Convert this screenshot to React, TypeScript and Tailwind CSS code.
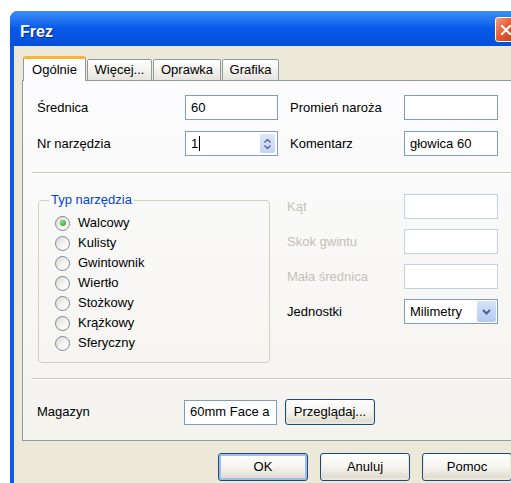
import React from 'react';

type BoxProps = { value?: string; disabled?: boolean; w?: string };

// plain edit field in the XP style
function TextBox({ value = '', disabled = false, w = 'w-[93px]' }: BoxProps) {
  return (
    <div
      className={`${w} h-[25px] flex items-center px-[5px] bg-white border ${
        disabled ? 'border-[#c4d0e2]' : 'border-[#7f9db9]'
      } text-black whitespace-nowrap overflow-hidden`}
    >
      {value}
    </div>
  );
}

function SpinBox({ value }: { value: string }) {
  return (
    <div className="w-[93px] h-[25px] flex items-center justify-between pl-[5px] pr-[2px] bg-white border border-[#7f9db9]">
      <span className="flex items-center">
        {value}
        <span className="ml-[1px] w-[1px] h-[15px] bg-black" />
      </span>
      <span className="w-[15px] h-[19px] rounded-[2px] bg-gradient-to-b from-[#dde7fc] to-[#c3d2f5] flex flex-col items-center justify-center gap-[2px]">
        <svg width="7" height="4" viewBox="0 0 7 4">
          <path d="M0.5 3.5 L3.5 0.5 L6.5 3.5" fill="none" stroke="#4d6185" strokeWidth="1.3" />
        </svg>
        <svg width="7" height="4" viewBox="0 0 7 4">
          <path d="M0.5 0.5 L3.5 3.5 L6.5 0.5" fill="none" stroke="#4d6185" strokeWidth="1.3" />
        </svg>
      </span>
    </div>
  );
}

function Select({ value }: { value: string }) {
  return (
    <div className="w-[94px] h-[25px] flex items-center justify-between pl-[5px] pr-[1px] bg-white border border-[#7f9db9]">
      <span>{value}</span>
      <span className="w-[19px] h-[21px] rounded-[2px] bg-gradient-to-b from-[#d6e2fc] to-[#b5c9f5] flex items-center justify-center">
        <svg width="9" height="6" viewBox="0 0 9 6">
          <path d="M1 1 L4.5 4.5 L8 1" fill="none" stroke="#4d6185" strokeWidth="2" />
        </svg>
      </span>
    </div>
  );
}

function Radio({ label, checked = false }: { label: string; checked?: boolean }) {
  return (
    <div className="h-[20px] flex items-center">
      <span className="w-[15px] h-[15px] rounded-full border border-[#7c8796] bg-gradient-to-br from-[#d8d8d2] via-[#f2f2ee] to-white flex items-center justify-center">
        {checked && (
          <span className="w-[6px] h-[6px] rounded-full bg-[radial-gradient(circle_at_35%_35%,#7ee07e,#21a121)]" />
        )}
      </span>
      <span className="ml-[8px]">{label}</span>
    </div>
  );
}

function Button({ children, w = 'w-[90px]', h = 'h-[28px]', primary = false }: {
  children: React.ReactNode; w?: string; h?: string; primary?: boolean;
}) {
  return (
    <div
      className={`${w} ${h} shrink-0 rounded-[3px] border border-[#1c4a7e] bg-gradient-to-b from-white via-[#f5f4ef] to-[#dcd7cb] flex items-center justify-center ${
        primary ? 'shadow-[inset_0_0_0_2px_#9dbdf0]' : 'shadow-[inset_0_-1px_0_1px_#ece9d8]'
      }`}
    >
      {children}
    </div>
  );
}

function Etched() {
  return <div className="h-[2px] border-t border-[#cbc8b8] border-b border-b-white" />;
}

const tools = ['Walcowy', 'Kulisty', 'Gwintownik', 'Wiertło', 'Stożkowy', 'Krążkowy', 'Sferyczny'];

export default function App() {
  return (
    <div className="w-[511px] h-[483px] overflow-hidden bg-white pt-[11px] pl-[10px] font-['Liberation_Sans',Arial,sans-serif] text-[13px] text-black">
      <div className="w-[520px] h-[472px] rounded-t-[8px] bg-[#1458e8] flex flex-col overflow-hidden">
        {/* title bar */}
        <div className="h-[35px] shrink-0 flex items-start justify-between pl-[10px] pr-[13px] bg-gradient-to-b from-[#3d8ef9] via-[#0759e8] to-[#0550dc]">
          <span className="mt-[9px] text-[16px] font-bold text-white [text-shadow:1px_1px_0_#0a2a8a]">Frez</span>
          <span className="mt-[6px] w-[22px] h-[25px] rounded-[3px] border border-white bg-gradient-to-br from-[#f39a7a] via-[#e2582e] to-[#c63c14] flex items-center justify-center">
            <svg width="12" height="12" viewBox="0 0 12 12">
              <path d="M2 2 L10 10 M10 2 L2 10" stroke="white" strokeWidth="2.2" strokeLinecap="round" />
            </svg>
          </span>
        </div>

        {/* client area */}
        <div className="flex-1 mx-[4px] bg-[#ece9d8] pt-[10px] pl-[8px] pr-[8px]">
          {/* tabs */}
          <div className="relative z-10 h-[25px] -mb-[1px] flex items-end pl-[1px]">
            <div className="w-[63px] h-[25px] rounded-t-[3px] border-x border-[#919b9c] border-t-[3px] border-t-[#f8b43c] bg-[#fcfcfe] flex items-center justify-center pb-[1px]">
              Ogólnie
            </div>
            {[
              ['Więcej...', 'w-[65px]'],
              ['Oprawka', 'w-[68px]'],
              ['Grafika', 'w-[57px]'],
            ].map(([t, w]) => (
              <div
                key={t}
                className={`${w} h-[22px] ml-[1px] rounded-t-[2px] border border-[#919b9c] bg-gradient-to-b from-white to-[#e6e4dc] flex items-center justify-center`}
              >
                {t}
              </div>
            ))}
          </div>

          {/* tab page */}
          <div className="h-[361px] border border-[#919b9c] bg-gradient-to-b from-[#fcfcfe] to-[#f4f3ee] flex flex-col">
            <div className="pt-[14px] pl-[14px] flex flex-col gap-[11px]">
              <div className="flex items-center">
                <span className="w-[148px]">Średnica</span>
                <TextBox value="60" />
                <span className="ml-[12px] w-[114px]">Promień naroża</span>
                <TextBox w="w-[94px]" />
              </div>
              <div className="flex items-center">
                <span className="w-[148px]">Nr narzędzia</span>
                <SpinBox value="1" />
                <span className="ml-[12px] w-[114px]">Komentarz</span>
                <TextBox value="głowica 60" w="w-[94px]" />
              </div>
            </div>

            <div className="mt-[16px] ml-[9px]">
              <Etched />
            </div>

            <div className="mt-[18px] flex items-start">
              <fieldset className="ml-[15px] w-[232px] h-[171px] rounded-[4px] border border-[#d0d0bf] pl-[16px]">
                <legend className="ml-[-6px] px-[2px] leading-[16px] text-[#0046d5]">Typ narzędzia</legend>
                <div className="pt-[5px] flex flex-col">
                  {tools.map((t, i) => (
                    <Radio key={t} label={t} checked={i === 0} />
                  ))}
                </div>
              </fieldset>

              <div className="ml-[17px] mt-[2px] flex flex-col gap-[10px]">
                {['Kąt', 'Skok gwintu', 'Mała średnica'].map((t) => (
                  <div key={t} className="flex items-center">
                    <span className="w-[117px] text-[#c4c1b6]">{t}</span>
                    <TextBox disabled w="w-[94px]" />
                  </div>
                ))}
                <div className="flex items-center">
                  <span className="w-[117px]">Jednostki</span>
                  <Select value="Milimetry" />
                </div>
              </div>
            </div>

            <div className="mt-[15px] ml-[9px]">
              <Etched />
            </div>

            <div className="mt-[19px] ml-[14px] flex items-center">
              <span className="w-[147px]">Magazyn</span>
              <TextBox value="60mm Face a" />
              <div className="ml-[8px]">
                <Button h="h-[26px]">Przeglądaj...</Button>
              </div>
            </div>
          </div>

          {/* dialog buttons */}
          <div className="mt-[12px] pl-[196px] flex gap-[12px]">
            <Button primary>OK</Button>
            <Button>Anuluj</Button>
            <Button>Pomoc</Button>
          </div>
        </div>
      </div>
    </div>
  );
}
